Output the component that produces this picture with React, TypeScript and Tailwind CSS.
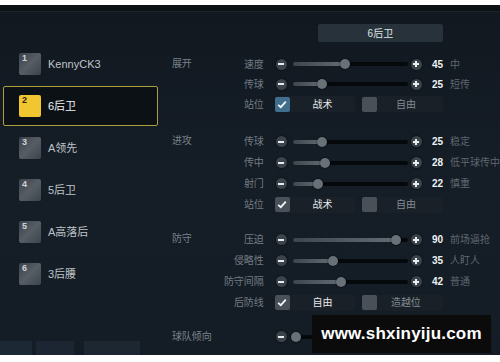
import React from 'react'

type SliderRow = { label: string; value: number; desc: string }
type CheckRow = { label: string; a: string; b: string; blue?: boolean }
type Section = { title: string; rows: SliderRow[]; check: CheckRow; rowH: string; mt: string }

const players = [
  { n: 1, name: 'KennyCK3' },
  { n: 2, name: '6后卫', active: true },
  { n: 3, name: 'A领先' },
  { n: 4, name: '5后卫' },
  { n: 5, name: 'A高落后' },
  { n: 6, name: '3后腰' },
]

const sections: Section[] = [
  {
    title: '展开',
    rowH: 'h-[20px]',
    mt: 'mt-[12px]',
    rows: [
      { label: '速度', value: 45, desc: '中' },
      { label: '传球', value: 25, desc: '短传' },
    ],
    check: { label: '站位', a: '战术', b: '自由', blue: true },
  },
  {
    title: '进攻',
    rowH: 'h-[21px]',
    mt: 'mt-[17px]',
    rows: [
      { label: '传球', value: 25, desc: '稳定' },
      { label: '传中', value: 28, desc: '低平球传中' },
      { label: '射门', value: 22, desc: '慎重' },
    ],
    check: { label: '站位', a: '战术', b: '自由' },
  },
  {
    title: '防守',
    rowH: 'h-[21px]',
    mt: 'mt-[14px]',
    rows: [
      { label: '压迫', value: 90, desc: '前场逼抢' },
      { label: '侵略性', value: 35, desc: '人盯人' },
      { label: '防守间隔', value: 42, desc: '普通' },
    ],
    check: { label: '后防线', a: '自由', b: '造越位' },
  },
]

const RoundBtn = ({ plus }: { plus?: boolean }) => (
  <div className="w-[11px] h-[11px] rounded-full bg-[#3b434b] flex items-center justify-center shadow-[0_0_2px_rgba(0,0,0,0.8)]">
    <div className="relative w-[6px] h-[6px]">
      <div className="absolute left-0 top-[2px] w-[6px] h-[2px] bg-[#e8ecef]" />
      {plus && <div className="absolute top-0 left-[2px] w-[2px] h-[6px] bg-[#e8ecef]" />}
    </div>
  </div>
)

const Track = ({ value }: { value: number }) => (
  <div className="relative ml-[6px] w-[115px] h-[4px] rounded-full bg-[#06090c]">
    <div
      className="absolute left-0 top-0 h-[4px] rounded-full bg-gradient-to-r from-[#3e454d] to-[#636b73]"
      style={{ width: `${value}%` }}
    />
    <div
      className="absolute top-[-3px] w-[10px] h-[10px] -ml-[5px] rounded-full bg-[#687078] shadow-[0_0_2px_rgba(0,0,0,0.9)]"
      style={{ left: `${value}%` }}
    />
  </div>
)

const Check = ({ on, blue }: { on: boolean; blue?: boolean }) => (
  <div
    className={`w-[15px] h-[15px] rounded-[2px] flex items-center justify-center ${
      blue ? 'bg-[#3f6f8c]' : 'bg-[#4a5057]'
    }`}
  >
    {on && (
      <svg width="10" height="9" viewBox="0 0 10 9">
        <path d="M1.2 4.8 L3.8 7.2 L8.8 1.6" fill="none" stroke="#f2f4f6" strokeWidth="1.8" />
      </svg>
    )}
  </div>
)

const App: React.FC = () => {
  return (
    <div
      className="w-[500px] h-[362px] bg-white relative overflow-hidden"
      style={{ fontFamily: '"Liberation Sans", "Noto Sans CJK SC", sans-serif' }}
    >
      <div className="mt-[5px] h-[350px] bg-[#141b23] bg-gradient-to-b from-[#111820] via-[#151d26] to-[#141c25] flex flex-col">
        {/* top strip */}
        <div className="h-[7px] bg-[#0c1116] border-b border-[#1c252d]" />

        <div className="flex flex-1">
          {/* player list */}
          <div className="w-[165px] pt-[31px] flex flex-col relative">
            {players.map((p) => (
              <div key={p.n} className="h-[42px] flex items-center">
                <div
                  className={`flex items-center w-[155px] h-[40px] ml-[3px] pl-[15px] rounded-[2px] ${
                    p.active ? 'border border-[#aca03c] bg-[#0c1116]' : 'border border-transparent'
                  }`}
                >
                  <div
                    className={`relative w-[22px] h-[22px] rounded-[2px] ${
                      p.active
                        ? 'bg-[#f1c630]'
                        : 'bg-gradient-to-br from-[#3b4249] via-[#565d64] to-[#3d444b]'
                    }`}
                  >
                    <span
                      className={`absolute left-[3px] top-[1px] text-[9px] leading-none font-bold ${
                        p.active ? 'text-[#2a2410]' : 'text-[#cfd3d6]'
                      }`}
                    >
                      {p.n}
                    </span>
                  </div>
                  <span
                    className={`ml-[7px] text-[11px] ${p.active ? 'text-[#f0f2f4]' : 'text-[#bfc4c8]'}`}
                  >
                    {p.name}
                  </span>
                </div>
              </div>
            ))}
            <div className="mt-auto h-[14px] flex gap-[4px] opacity-40">
              <div className="w-[32px] h-full bg-[#2a3a48]" />
              <div className="w-[38px] h-full bg-[#273646]" />
              <div className="ml-[6px] w-[56px] h-full bg-[#293846]" />
            </div>
          </div>

          {/* tactics */}
          <div className="flex-1 flex flex-col">
            <div className="ml-[153px] mt-[12px] w-[125px] h-[18px] rounded-[2px] bg-[#28323b] flex items-center justify-center text-[10px] text-[#dfe3e6]">
              6后卫
            </div>

            {sections.map((s) => (
              <div key={s.title} className={`flex ${s.mt} text-[10px]`}>
                <div className="w-[47px] pl-[7px] text-[#79828a] leading-[20px] whitespace-nowrap">
                  {s.title}
                </div>
                <div className="flex flex-col">
                  {s.rows.map((r) => (
                    <div key={r.label} className={`flex items-center ${s.rowH}`}>
                      <div className="w-[52px] text-right text-[#737c84] whitespace-nowrap">{r.label}</div>
                      <div className="ml-[12px]">
                        <RoundBtn />
                      </div>
                      <Track value={r.value} />
                      <div className="ml-[3px]">
                        <RoundBtn plus />
                      </div>
                      <div className="ml-[10px] font-bold text-[#eef1f3]">{r.value}</div>
                      <div className="ml-[7px] text-[#5f6870] whitespace-nowrap">{r.desc}</div>
                    </div>
                  ))}
                  <div className={`flex items-center ${s.rowH}`}>
                    <div className="w-[52px] text-right text-[#737c84] whitespace-nowrap">{s.check.label}</div>
                    <div className="ml-[11px] flex items-center w-[80px] h-[16px] rounded-[3px] bg-[#192028]">
                      <Check on blue={s.check.blue} />
                      <div className="flex-1 text-center text-[#e6e9ec]">{s.check.a}</div>
                    </div>
                    <div className="ml-[7px] flex items-center w-[81px] h-[16px] rounded-[3px] bg-[#192028]">
                      <Check on={false} />
                      <div className="flex-1 text-center text-[#838c93] pr-[8px]">{s.check.b}</div>
                    </div>
                  </div>
                </div>
              </div>
            ))}

            <div className="flex mt-[13px] text-[10px] h-[21px] items-center">
              <div className="w-[111px] pl-[7px] text-[#79828a] whitespace-nowrap">球队倾向</div>
              <RoundBtn />
              <Track value={3} />
            </div>
          </div>
        </div>
      </div>

      {/* watermark overlay */}
      <div className="absolute left-[312px] top-[315px] w-[179px] h-[38px] bg-[#0b0b0b] flex items-center justify-center">
        <span className="text-white font-bold text-[17px] tracking-[0.2px]">www.shxinyiju.com</span>
      </div>
    </div>
  )
}

export default App
